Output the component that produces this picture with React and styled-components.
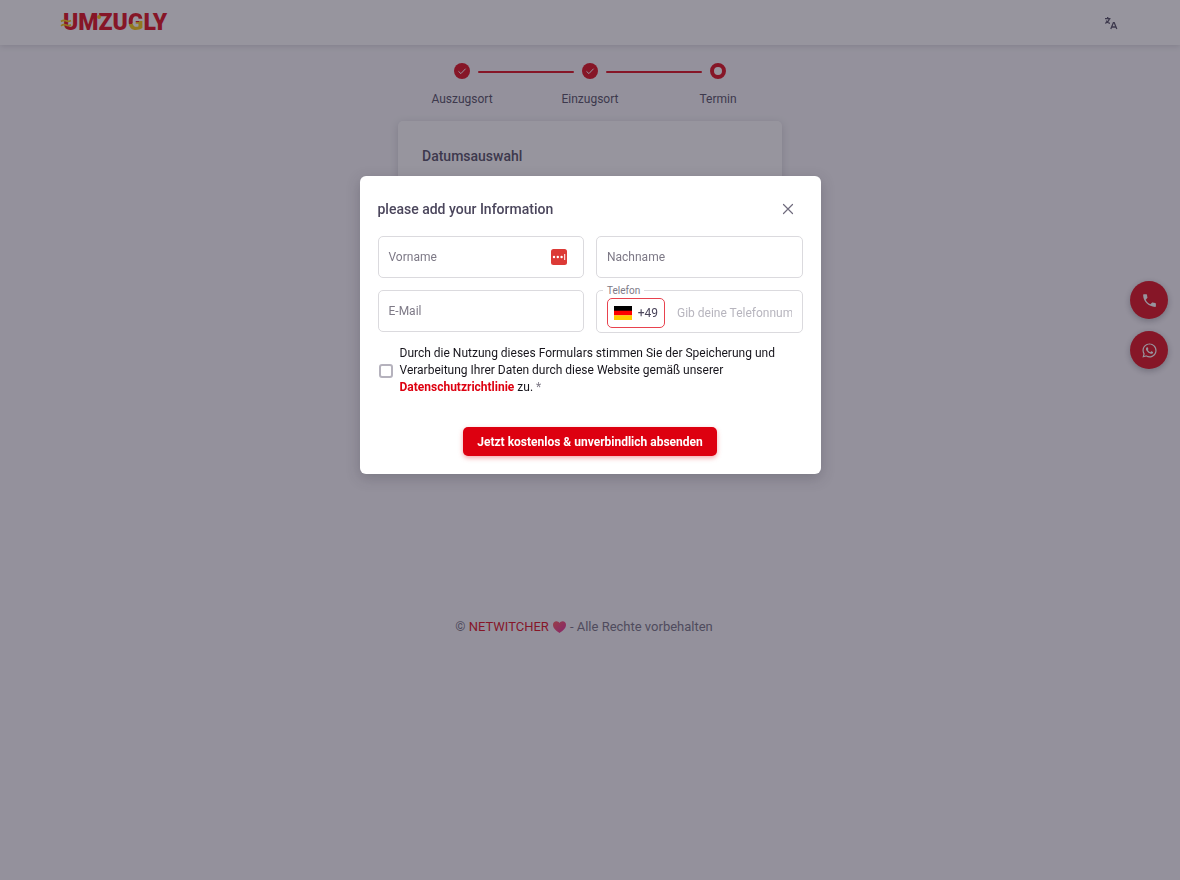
import React from 'react';
import styled, { createGlobalStyle, css } from 'styled-components';
import { MdPhone, MdWhatsapp } from 'react-icons/md';

const RED = '#dd0010';
const INK = '#4b465c';
const MUTED = '#7d7986';

const GlobalStyle = createGlobalStyle`
  *, *::before, *::after { box-sizing: border-box; }
  body {
    margin: 0;
    background: #f8f7fa;
    color: ${INK};
    font-family: Roboto, "Liberation Sans", sans-serif;
    font-size: 12px;
  }
  button, input { font: inherit; }
`;

const Page = styled.div`
  display: flex;
  flex-direction: column;
  min-height: 100vh;
`;

const Header = styled.header`
  display: flex;
  align-items: center;
  justify-content: space-between;
  height: 45px;
  padding: 0 62px;
  background: #fff;
  box-shadow: 0 1px 6px rgba(47, 43, 61, 0.18);
`;

const Logo = styled.a`
  position: relative;
  display: flex;
  padding-left: 1px;
  color: ${RED};
  font-size: 23px;
  font-weight: 900;
  line-height: 24px;
  text-decoration: none;
`;

const LogoG = styled.span`
  background: linear-gradient(165deg, ${RED} 48%, #f5c400 48%);
  background-clip: text;
  color: transparent;
`;

const LogoMarks = styled.svg`
  position: absolute;
  left: -2px;
  top: 0;
`;

const IconButton = styled.button`
  display: grid;
  place-items: center;
  padding: 0;
  border: 0;
  background: none;
  color: ${(p) => p.$color || INK};
  cursor: pointer;
`;

const Main = styled.main`
  flex: none;
  width: 100%;
  max-width: 384px;
  min-height: 566px;
  margin: 0 auto;
  padding-top: 18px;
`;

const Stepper = styled.ol`
  display: flex;
  margin: 0;
  padding: 0;
  list-style: none;
`;

const Step = styled.li`
  position: relative;
  flex: 1;
  display: flex;
  flex-direction: column;
  align-items: center;
  gap: 12px;
  line-height: 16px;

  & + &::before {
    content: "";
    position: absolute;
    top: 8px;
    left: calc(-50% + 16px);
    right: calc(50% + 16px);
    height: 2px;
    border-radius: 1px;
    background: ${RED};
  }
`;

const StepDot = styled.span`
  display: grid;
  place-items: center;
  width: 16px;
  height: 16px;
  border-radius: 50%;
  background: ${(p) => (p.$done ? RED : '#fff')};
  border: ${(p) => (p.$done ? '0' : `4px solid ${RED}`)};
`;

const Card = styled.section`
  height: 240px;
  margin-top: 14px;
  padding: 24px;
  border-radius: 5px;
  background: #fff;
  box-shadow: 0 2px 8px rgba(47, 43, 61, 0.2);
`;

const Heading = styled.h2`
  margin: 0;
  color: ${INK};
  font-size: 14px;
  font-weight: 500;
  line-height: 22px;
`;

const Footer = styled.footer`
  display: flex;
  align-items: center;
  justify-content: center;
  padding-right: 12px;
  gap: 4px;
  color: #6f6b7d;
  font-size: 13px;
  line-height: 32px;

  a { color: ${RED}; text-decoration: none; }
`;

const FloatingActions = styled.nav`
  position: fixed;
  top: 281px;
  right: 12px;
  display: grid;
  gap: 12px;
`;

const Fab = styled.a`
  display: grid;
  place-items: center;
  width: 38px;
  height: 38px;
  border-radius: 50%;
  background: ${RED};
  color: #fff;
  box-shadow: 0 2px 6px rgba(47, 43, 61, 0.35);
`;

const Backdrop = styled.div`
  position: fixed;
  inset: 0;
  display: flex;
  align-items: flex-start;
  justify-content: center;
  padding: 176px 16px 16px;
  background: rgba(47, 43, 61, 0.5);
`;

const Dialog = styled.form`
  display: flex;
  flex-direction: column;
  width: 100%;
  max-width: 461px;
  padding: 18px;
  border-radius: 6px;
  background: #fff;
  box-shadow: 0 4px 14px rgba(47, 43, 61, 0.25);
`;

const DialogHeader = styled.div`
  display: flex;
  align-items: center;
  justify-content: space-between;
  height: 30px;
  padding-right: 8px;
  margin-bottom: 12px;
`;

const FieldGrid = styled.div`
  display: grid;
  grid-template-columns: 1fr 1fr;
  gap: 12px;
`;

const outline = css`
  border: 1px solid #dbdade;
  border-radius: 5px;
`;

const Field = styled.div`
  ${outline}
  display: grid;
  grid-template-columns: 1fr auto;
  align-items: center;
  height: 42px;
  padding-right: 16px;
`;

const FieldLabel = styled.label`
  grid-area: 1 / 1;
  padding-left: 10px;
  color: ${MUTED};
  pointer-events: none;
`;

const TextInput = styled.input`
  grid-area: 1 / 1;
  width: 100%;
  min-width: 0;
  height: 40px;
  padding: 0 10px;
  border: 0;
  outline: 0;
  background: none;
  color: ${INK};
`;

const PhoneField = styled.div`
  ${outline}
  position: relative;
  display: flex;
  align-items: center;
  gap: 12px;
  min-width: 0;
  height: 43px;
  padding: 2px 10px 0;
`;

const PhoneLabel = styled.label`
  position: absolute;
  top: -7px;
  left: 6px;
  padding: 0 4px;
  background: #fff;
  color: ${MUTED};
  font-size: 10px;
  line-height: 14px;
`;

const CountryButton = styled.button`
  display: flex;
  flex: none;
  align-items: center;
  justify-content: space-between;
  width: 58px;
  height: 30px;
  padding: 0 6px;
  border: 1px solid #e8424e;
  border-radius: 5px;
  background: #fff;
  color: ${INK};
  cursor: pointer;
`;

const PhoneInput = styled.input`
  flex: 1;
  min-width: 0;
  height: 30px;
  padding: 0;
  border: 0;
  outline: 0;
  background: none;
  color: ${INK};

  &::placeholder { color: #b7b5be; opacity: 1; }
`;

const Consent = styled.div`
  display: flex;
  align-items: center;
  gap: 7px;
  margin-top: 12px;
  padding-left: 1px;
  color: #17151c;
  line-height: 17px;

  a { color: ${RED}; font-weight: 700; text-decoration: none; }
  span { color: ${MUTED}; }
`;

const Checkbox = styled.input`
  appearance: none;
  flex: none;
  width: 14px;
  height: 14px;
  margin: 0;
  border: 2px solid #b5b2bd;
  border-radius: 3px;
  background: #fff;

  &:checked { border-color: ${RED}; background: ${RED}; }
`;

const SubmitButton = styled.button`
  align-self: center;
  width: 254px;
  height: 29px;
  margin-top: 31px;
  padding: 0;
  border: 0;
  border-radius: 5px;
  background: ${RED};
  color: #fff;
  font-weight: 700;
  white-space: nowrap;
  box-shadow: 0 2px 5px rgba(221, 0, 16, 0.35);
  cursor: pointer;
`;

const STEPS = [
  { label: 'Auszugsort', done: true },
  { label: 'Einzugsort', done: true },
  { label: 'Termin', done: false },
];

const LanguageIcon = () => (
  <svg width="14" height="14" viewBox="0 0 14 14" fill="none" stroke="currentColor" strokeWidth="1.300" aria-hidden="true">
    <path d="M1 2.700h5.500M3.700 1v1.700M5.500 2.700C5 4.800 3.300 6.400 1.300 7.300M2.200 4.600c.900 1.600 2.300 2.500 3.800 2.700" />
    <path d="M6.800 13 9.400 6.600h.800L12.800 13M7.700 11h4.200" />
  </svg>
);

const CheckIcon = () => (
  <svg width="10" height="10" viewBox="0 0 10 10" fill="none" stroke="#fff" strokeWidth="1" aria-hidden="true">
    <path d="M1.500 5.400 3.900 7.600 8.600 2.700" />
  </svg>
);

const FlagIcon = () => (
  <svg width="18" height="14" viewBox="0 0 18 14" aria-hidden="true">
    <path fill="#000" d="M0 0h18v5H0z" />
    <path fill="#f00" d="M0 4.700h18v4.700H0z" />
    <path fill="#fc0" d="M0 9.300h18V14H0z" />
  </svg>
);

const PasswordIcon = () => (
  <svg width="16" height="16" viewBox="0 0 16 16" aria-hidden="true">
    <rect width="16" height="16" rx="2.500" fill="#dc3a36" />
    <g fill="#fff">
      <circle cx="3" cy="8" r="1.200" />
      <circle cx="6.800" cy="8" r="1.200" />
      <circle cx="10.600" cy="8" r="1.200" />
      <rect x="13.200" y="5" width="1" height="6" />
    </g>
  </svg>
);

const HeartIcon = () => (
  <svg width="13" height="12" viewBox="0 0 13 12" aria-hidden="true">
    <defs>
      <linearGradient id="heart" x1="0" y1="0" x2="1" y2="1">
        <stop offset="0" stopColor="#ff5252" />
        <stop offset="1" stopColor="#e0209a" />
      </linearGradient>
    </defs>
    <path fill="url(#heart)" d="M6.500 12C3 9.600 0 7.200 0 3.800 0 1.600 1.500.200 3.400.200c1.300 0 2.500.700 3.100 1.900C7.100.900 8.300.200 9.600.200c1.900 0 3.400 1.400 3.400 3.600 0 3.400-3 5.800-6.500 8.200z" />
  </svg>
);

const CloseIcon = () => (
  <svg width="14" height="14" viewBox="0 0 14 14" fill="none" stroke="currentColor" strokeWidth="1.200" strokeLinecap="round" aria-hidden="true">
    <path d="m2.500 2.500 9 9m0-9-9 9" />
  </svg>
);

export default function App() {
  return (
    <>
      <GlobalStyle />
      <Page>
        <Header>
          <Logo href="#" aria-label="Umzugly">
            UMZU<LogoG>G</LogoG>LY
            <LogoMarks width="48" height="24" viewBox="0 0 48 24" aria-hidden="true">
              <path d="M1 10.500q2.500-2 5-.700t5-.300M1 14.800q2.500-2 5-.700t5-.300" fill="none" stroke="#f5c400" strokeWidth="1.700" />
              <circle cx="39" cy="6" r="2" fill="#f5c400" />
            </LogoMarks>
          </Logo>
          <IconButton type="button" aria-label="Sprache">
            <LanguageIcon />
          </IconButton>
        </Header>

        <Main>
          <Stepper>
            {STEPS.map((step) => (
              <Step key={step.label}>
                <StepDot $done={step.done}>{step.done && <CheckIcon />}</StepDot>
                {step.label}
              </Step>
            ))}
          </Stepper>
          <Card>
            <Heading>Datumsauswahl</Heading>
          </Card>
        </Main>

        <Footer>
          <span>© <a href="#">NETWITCHER</a></span>
          <HeartIcon />
          <span>- Alle Rechte vorbehalten</span>
        </Footer>

        <FloatingActions aria-label="Kontakt">
          <Fab href="#" aria-label="Telefon"><MdPhone size={17} /></Fab>
          <Fab href="#" aria-label="WhatsApp"><MdWhatsapp size={17} /></Fab>
        </FloatingActions>
      </Page>

      <Backdrop>
        <Dialog role="dialog" aria-modal="true" aria-labelledby="dialog-title" onSubmit={(e) => e.preventDefault()}>
          <DialogHeader>
            <Heading id="dialog-title">please add your Information</Heading>
            <IconButton type="button" aria-label="Schließen" $color="#6f6b7d"><CloseIcon /></IconButton>
          </DialogHeader>

          <FieldGrid>
            <Field>
              <FieldLabel htmlFor="vorname">Vorname</FieldLabel>
              <TextInput id="vorname" />
              <PasswordIcon />
            </Field>
            <Field>
              <FieldLabel htmlFor="nachname">Nachname</FieldLabel>
              <TextInput id="nachname" />
            </Field>
            <Field>
              <FieldLabel htmlFor="email">E-Mail</FieldLabel>
              <TextInput id="email" type="email" />
            </Field>
            <PhoneField>
              <PhoneLabel htmlFor="telefon">Telefon</PhoneLabel>
              <CountryButton type="button"><FlagIcon />+49</CountryButton>
              <PhoneInput id="telefon" type="tel" placeholder="Gib deine Telefonnummer ein" />
            </PhoneField>
          </FieldGrid>

          <Consent>
            <Checkbox type="checkbox" id="consent" />
            <label htmlFor="consent">
              Durch die Nutzung dieses Formulars stimmen Sie der Speicherung und Verarbeitung Ihrer Daten durch diese Website gemäß unserer <a href="#">Datenschutzrichtlinie</a> zu. <span>*</span>
            </label>
          </Consent>

          <SubmitButton type="submit">Jetzt kostenlos &amp; unverbindlich absenden</SubmitButton>
        </Dialog>
      </Backdrop>
    </>
  );
}
